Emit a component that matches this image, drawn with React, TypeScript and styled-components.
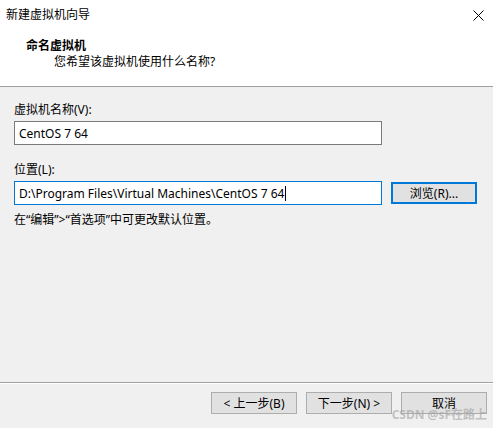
import React from 'react'
import styled, { createGlobalStyle } from 'styled-components'

const GlobalStyle = createGlobalStyle`
  html, body {
    margin: 0;
    padding: 0;
    background: #f0f0f0;
  }
  body {
    font-family: 'Noto Sans', 'Noto Sans CJK SC', sans-serif;
    font-size: 12px;
    color: #000;
  }
`

const Window = styled.div`
  position: relative;
  width: 493px;
  height: 428px;
  display: flex;
  flex-direction: column;
  background: #f0f0f0;
  overflow: hidden;
`

const Top = styled.div`
  height: 86px;
  background: #fff;
  border-bottom: 1px solid #a0a0a0;
`

const TitleBar = styled.div`
  height: 30px;
  display: flex;
  align-items: center;
  justify-content: space-between;
  padding: 0 9px 0 6px;
`

const Title = styled.span`
  line-height: 30px;
`

const Heading = styled.div`
  padding: 8px 0 0 26px;
  line-height: 16px;
  font-weight: bold;
`

const SubHeading = styled.div`
  padding-left: 54px;
  line-height: 16px;
`

const Body = styled.div`
  flex: 1;
  padding: 15px 14px 0 14px;
  display: flex;
  flex-direction: column;
`

const Label = styled.div<{ $top?: number }>`
  line-height: 16px;
  margin-top: ${(p) => p.$top ?? 0}px;
  margin-bottom: 3px;
`

const Row = styled.div`
  display: flex;
  align-items: center;
  gap: 9px;
`

const TextBox = styled.div<{ $focused?: boolean }>`
  box-sizing: border-box;
  width: 368px;
  height: 24px;
  padding: 0 4px;
  display: flex;
  align-items: center;
  background: #fff;
  border: 1px solid ${(p) => (p.$focused ? '#0078d7' : '#7a7a7a')};
  white-space: nowrap;
`

const Caret = styled.span`
  display: inline-block;
  width: 1px;
  height: 15px;
  background: #000;
  margin-left: 1px;
`

const Hint = styled.div`
  margin-top: 7px;
  line-height: 16px;
`

const Button = styled.button<{ $default?: boolean }>`
  box-sizing: border-box;
  width: 86px;
  height: 22px;
  padding: 0;
  font-family: inherit;
  font-size: 12px;
  color: #000;
  background: #e1e1e1;
  border: ${(p) => (p.$default ? '2px solid #0078d7' : '1px solid #adadad')};
  display: flex;
  align-items: center;
  justify-content: center;
`

const Footer = styled.div`
  border-top: 1px solid #a0a0a0;
  box-shadow: inset 0 1px 0 #fff;
  height: 36px;
  padding: 9px 6px 0 0;
  display: flex;
  justify-content: flex-end;
  gap: 9px;
`

const Watermark = styled.div`
  position: absolute;
  right: 6px;
  bottom: 5px;
  font-size: 12px;
  color: rgba(160, 160, 160, 0.6);
  font-weight: bold;
  pointer-events: none;
`

const CloseIcon = () => (
  <svg width="11" height="11" viewBox="0 0 11 11">
    <path d="M0.5 0.5 L10.5 10.5 M10.5 0.5 L0.5 10.5" stroke="#000" strokeWidth="1" fill="none" />
  </svg>
)

export default function App() {
  return (
    <Window>
      <GlobalStyle />
      <Top>
        <TitleBar>
          <Title>新建虚拟机向导</Title>
          <CloseIcon />
        </TitleBar>
        <Heading>命名虚拟机</Heading>
        <SubHeading>您希望该虚拟机使用什么名称?</SubHeading>
      </Top>
      <Body>
        <Label>虚拟机名称(V):</Label>
        <TextBox>CentOS 7 64</TextBox>
        <Label $top={17}>位置(L):</Label>
        <Row>
          <TextBox $focused>
            D:\Program Files\Virtual Machines\CentOS 7 64
            <Caret />
          </TextBox>
          <Button $default>浏览(R)...</Button>
        </Row>
        <Hint>在“编辑”&gt;“首选项”中可更改默认位置。</Hint>
      </Body>
      <Footer>
        <Button>&lt; 上一步(B)</Button>
        <Button>下一步(N) &gt;</Button>
        <Button>取消</Button>
      </Footer>
      <Watermark>CSDN @sF在路上</Watermark>
    </Window>
  )
}
